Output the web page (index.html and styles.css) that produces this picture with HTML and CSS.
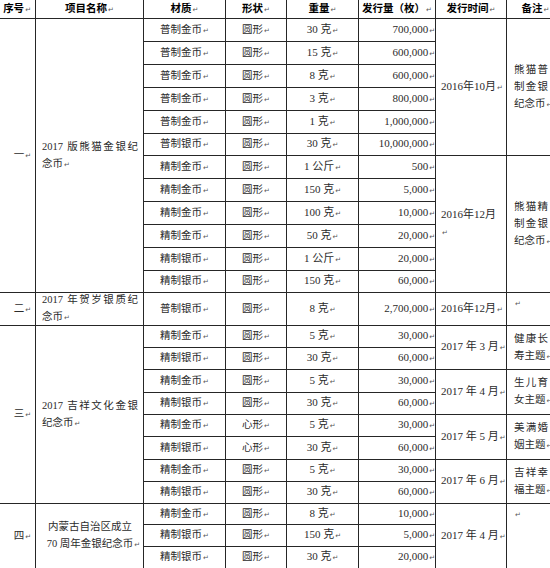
FILE: index.html
```html
<!DOCTYPE html>
<html lang="zh-CN">
<head>
<meta charset="utf-8">
<title>2017年贵金属纪念币发行计划</title>
<link rel="stylesheet" href="styles.css">
</head>
<body>
<div class="sheet">
  <div class="cell hd no"><p>序号</p></div>
  <div class="cell hd"><p>项目名称</p></div>
  <div class="cell hd"><p>材质</p></div>
  <div class="cell hd"><p>形状</p></div>
  <div class="cell hd"><p>重量</p></div>
  <div class="cell hd"><p>发行量（枚）</p></div>
  <div class="cell hd"><p>发行时间</p></div>
  <div class="cell hd rmh"><p>备注</p></div>

  <div class="cell no s12"><p>一</p></div>
  <div class="cell nm s12"><p>2017 版熊猫金银纪念币</p></div>
  <div class="cell mat"><p>普制金币</p></div><div class="cell shp"><p>圆形</p></div><div class="cell wt"><p>30 克</p></div><div class="cell qty"><p>700,000</p></div>
  <div class="cell dt s6"><p>2016年10月</p></div>
  <div class="cell rm s6"><p>熊猫普制金银纪念币</p></div>
  <div class="cell mat"><p>普制金币</p></div><div class="cell shp"><p>圆形</p></div><div class="cell wt"><p>15 克</p></div><div class="cell qty"><p>600,000</p></div>
  <div class="cell mat"><p>普制金币</p></div><div class="cell shp"><p>圆形</p></div><div class="cell wt"><p>8 克</p></div><div class="cell qty"><p>600,000</p></div>
  <div class="cell mat"><p>普制金币</p></div><div class="cell shp"><p>圆形</p></div><div class="cell wt"><p>3 克</p></div><div class="cell qty"><p>800,000</p></div>
  <div class="cell mat"><p>普制金币</p></div><div class="cell shp"><p>圆形</p></div><div class="cell wt"><p>1 克</p></div><div class="cell qty"><p>1,000,000</p></div>
  <div class="cell mat"><p>普制银币</p></div><div class="cell shp"><p>圆形</p></div><div class="cell wt"><p>30 克</p></div><div class="cell qty"><p>10,000,000</p></div>
  <div class="cell mat"><p>精制金币</p></div><div class="cell shp"><p>圆形</p></div><div class="cell wt"><p>1 公斤</p></div><div class="cell qty"><p>500</p></div>
  <div class="cell dt s6"><p>2016年12月<br></p></div>
  <div class="cell rm s6"><p>熊猫精制金银纪念币</p></div>
  <div class="cell mat"><p>精制金币</p></div><div class="cell shp"><p>圆形</p></div><div class="cell wt"><p>150 克</p></div><div class="cell qty"><p>5,000</p></div>
  <div class="cell mat"><p>精制金币</p></div><div class="cell shp"><p>圆形</p></div><div class="cell wt"><p>100 克</p></div><div class="cell qty"><p>10,000</p></div>
  <div class="cell mat"><p>精制金币</p></div><div class="cell shp"><p>圆形</p></div><div class="cell wt"><p>50 克</p></div><div class="cell qty"><p>20,000</p></div>
  <div class="cell mat"><p>精制银币</p></div><div class="cell shp"><p>圆形</p></div><div class="cell wt"><p>1 公斤</p></div><div class="cell qty"><p>20,000</p></div>
  <div class="cell mat"><p>精制银币</p></div><div class="cell shp"><p>圆形</p></div><div class="cell wt"><p>150 克</p></div><div class="cell qty"><p>60,000</p></div>

  <div class="cell no"><p>二</p></div>
  <div class="cell nm"><p>2017 年贺岁银质纪念币</p></div>
  <div class="cell mat"><p>普制银币</p></div><div class="cell shp"><p>圆形</p></div><div class="cell wt"><p>8 克</p></div><div class="cell qty"><p>2,700,000</p></div>
  <div class="cell dt"><p>2016年12月</p></div>
  <div class="cell rm top"><p></p></div>

  <div class="cell no s8"><p>三</p></div>
  <div class="cell nm s8"><p>2017 吉祥文化金银纪念币</p></div>
  <div class="cell mat"><p>精制金币</p></div><div class="cell shp"><p>圆形</p></div><div class="cell wt"><p>5 克</p></div><div class="cell qty"><p>30,000</p></div>
  <div class="cell dt s2"><p>2017 年 3 月</p></div>
  <div class="cell rm s2"><p>健康长寿主题</p></div>
  <div class="cell mat"><p>精制银币</p></div><div class="cell shp"><p>圆形</p></div><div class="cell wt"><p>30 克</p></div><div class="cell qty"><p>60,000</p></div>
  <div class="cell mat"><p>精制金币</p></div><div class="cell shp"><p>圆形</p></div><div class="cell wt"><p>5 克</p></div><div class="cell qty"><p>30,000</p></div>
  <div class="cell dt s2"><p>2017 年 4 月</p></div>
  <div class="cell rm s2"><p>生儿育女主题</p></div>
  <div class="cell mat"><p>精制银币</p></div><div class="cell shp"><p>圆形</p></div><div class="cell wt"><p>30 克</p></div><div class="cell qty"><p>60,000</p></div>
  <div class="cell mat"><p>精制金币</p></div><div class="cell shp"><p>心形</p></div><div class="cell wt"><p>5 克</p></div><div class="cell qty"><p>30,000</p></div>
  <div class="cell dt s2"><p>2017 年 5 月</p></div>
  <div class="cell rm s2"><p>美满婚姻主题</p></div>
  <div class="cell mat"><p>精制银币</p></div><div class="cell shp"><p>心形</p></div><div class="cell wt"><p>30 克</p></div><div class="cell qty"><p>60,000</p></div>
  <div class="cell mat"><p>精制金币</p></div><div class="cell shp"><p>圆形</p></div><div class="cell wt"><p>5 克</p></div><div class="cell qty"><p>30,000</p></div>
  <div class="cell dt s2"><p>2017 年 6 月</p></div>
  <div class="cell rm s2"><p>吉祥幸福主题</p></div>
  <div class="cell mat"><p>精制银币</p></div><div class="cell shp"><p>圆形</p></div><div class="cell wt"><p>30 克</p></div><div class="cell qty"><p>60,000</p></div>

  <div class="cell no s3"><p>四</p></div>
  <div class="cell nm nmc s3"><p>内蒙古自治区成立<br>70 周年金银纪念币</p></div>
  <div class="cell mat"><p>精制金币</p></div><div class="cell shp"><p>圆形</p></div><div class="cell wt"><p>8 克</p></div><div class="cell qty"><p>10,000</p></div>
  <div class="cell dt s3"><p>2017 年 4 月</p></div>
  <div class="cell rm top s3"><p></p></div>
  <div class="cell mat"><p>精制银币</p></div><div class="cell shp"><p>圆形</p></div><div class="cell wt"><p>150 克</p></div><div class="cell qty"><p>5,000</p></div>
  <div class="cell mat"><p>精制银币</p></div><div class="cell shp"><p>圆形</p></div><div class="cell wt"><p>30 克</p></div><div class="cell qty"><p>20,000</p></div>
</div>
</body>
</html>
```

FILE: styles.css
```css
html, body {
  margin: 0;
  padding: 0;
  overflow: hidden;
  background: #fff;
}

.sheet {
  display: grid;
  width: 557px;
  grid-template-columns: 36px 108px 82px 61px 72px 77px 71px 50px;
  grid-template-rows:
    19px
    23px 23px 23px 23px 23px 22px
    23px 23px 23px 23px 23px 22px
    33px
    22px 22px 23px 22px 22px 23px 22px 22px
    21px 22px 22px;
  font-family: "Liberation Serif", "Noto Sans CJK SC", serif;
  font-size: 10.5px;
  color: #2b2b2b;
}

.cell {
  box-sizing: border-box;
  border-right: 1px solid #262626;
  border-bottom: 1px solid #262626;
  display: flex;
  align-items: center;
  justify-content: center;
  min-width: 0;
  white-space: nowrap;
}

.cell > p {
  margin: 0;
  line-height: 17px;
}

.cell > p::after {
  content: "\21B5";
  font-family: "DejaVu Sans", sans-serif;
  font-size: 7px;
  font-weight: 400;
  color: #555;
  margin-left: 1px;
}

.s2 { grid-row: span 2; }
.s3 { grid-row: span 3; }
.s6 { grid-row: span 6; }
.s8 { grid-row: span 8; }
.s12 { grid-row: span 12; }

.hd {
  font-weight: 700;
  color: #000;
}

.no {
  justify-content: flex-end;
  padding-right: 4px;
}

.nm {
  justify-content: flex-start;
  padding: 0 5px 0 6px;
  white-space: normal;
}

.nm > p {
  width: 100%;
  text-align: justify;
}

.nm > p::after,
.rm > p::after {
  display: inline-block;
  width: 0;
  margin-left: 0;
  text-indent: 1px;
  overflow: visible;
  white-space: nowrap;
}

.nmc > p {
  text-align: center;
}

.wt,
.qty,
.dt {
  font-size: 11px;
}

.qty {
  justify-content: flex-end;
  padding-right: 0;
}

.dt {
  justify-content: flex-start;
  padding-left: 5px;
}

.rm {
  justify-content: flex-start;
  padding: 0 8px 0 7px;
  white-space: normal;
}

.rm > p {
  width: 100%;
  text-align: justify;
}

.rmh {
  padding-left: 8px;
}

.top {
  align-items: flex-start;
  padding-top: 1px;
}
```
